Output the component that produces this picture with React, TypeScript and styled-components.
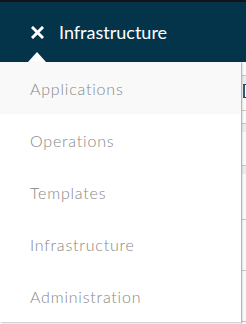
import React from "react";
import styled, { createGlobalStyle } from "styled-components";

const GlobalStyle = createGlobalStyle`
  html, body {
    margin: 0;
    padding: 0;
    background: #ffffff;
    font-family: Lato, "Open Sans", sans-serif;
  }
`;

const Page = styled.div`
  width: 246px;
  height: 324px;
  overflow: hidden;
  display: flex;
  flex-direction: column;
`;

const TopStrip = styled.div`
  height: 2px;
  background: #141414;
`;

const Header = styled.header`
  position: relative;
  height: 60px;
  display: flex;
  align-items: center;
  padding-left: 31px;
  background: #03344a;

  &::after {
    content: "";
    position: absolute;
    left: 28px;
    bottom: 0;
    border-left: 9px solid transparent;
    border-right: 9px solid transparent;
    border-bottom: 10px solid #ffffff;
  }
`;

const Title = styled.span`
  margin-left: 15px;
  font-size: 18px;
  font-weight: 400;
  color: #ffffff;
  line-height: 1;
`;

const Body = styled.div`
  flex: 1;
  display: flex;
`;

const Panel = styled.nav`
  width: 241px;
  height: 260px;
  display: flex;
  flex-direction: column;
  background: #ffffff;
  box-shadow: 1px 1px 2px rgba(0, 0, 0, 0.25);
  position: relative;
  z-index: 1;
`;

const Item = styled.a<{ $active?: boolean }>`
  height: 52px;
  display: flex;
  align-items: center;
  padding-left: 30px;
  font-size: 16px;
  font-weight: 300;
  letter-spacing: 0.8px;
  color: #878787;
  text-decoration: none;
  background: ${(p) => (p.$active ? "#f9f9f9" : "#ffffff")};
`;

const Backdrop = styled.div`
  flex: 1;
  display: flex;
  flex-direction: column;
  background: #fafafa;
  border-left: 1px solid #dcdcdc;
`;

const Segment = styled.div<{ $h: number; $band?: boolean }>`
  height: ${(p) => p.$h}px;
  flex-shrink: 0;
  background: ${(p) => (p.$band ? "#ececec" : "transparent")};
  border-bottom: ${(p) => (p.$band ? "none" : "1px solid #c4c4c4")};
`;

const Glyph = styled.div`
  height: 12px;
  flex-shrink: 0;
  border-left: 2px solid #2a5a7a;
  border-top: 1px solid #333;
  border-bottom: 1px solid #333;
  margin: 0 0 0 1px;
`;

const CloseIcon = () => (
  <svg width="13" height="13" viewBox="0 0 13 13">
    <path
      d="M2 2 L11 11 M11 2 L2 11"
      stroke="#ffffff"
      strokeWidth="3"
      strokeLinecap="square"
      fill="none"
    />
  </svg>
);

const items = [
  "Applications",
  "Operations",
  "Templates",
  "Infrastructure",
  "Administration",
];

export default function App() {
  return (
    <>
      <GlobalStyle />
      <Page>
        <TopStrip />
        <Header>
          <CloseIcon />
          <Title>Infrastructure</Title>
        </Header>
        <Body>
          <Panel>
            {items.map((label, i) => (
              <Item key={label} href="#" $active={i === 0}>
                {label}
              </Item>
            ))}
          </Panel>
          <Backdrop>
            <Segment $h={13} />
            <Segment $h={8} $band />
            <Glyph />
            <Segment $h={12} />
            <Segment $h={12} />
            <Segment $h={8} $band />
            <Segment $h={33} />
            <Segment $h={8} $band />
            <Segment $h={45} />
            <Segment $h={50} />
            <Segment $h={50} />
          </Backdrop>
        </Body>
      </Page>
    </>
  );
}
